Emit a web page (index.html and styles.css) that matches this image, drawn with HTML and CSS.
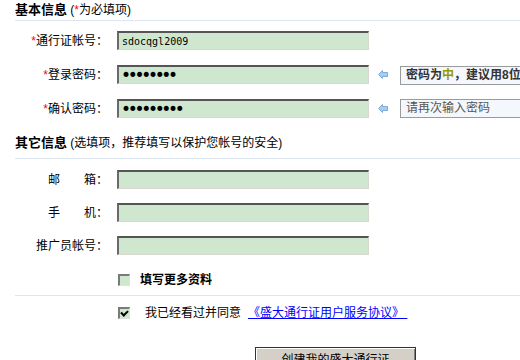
FILE: index.html
```html
<!DOCTYPE html>
<html lang="zh-CN">
<head>
  <meta charset="UTF-8" />
  <title>注册盛大通行证</title>
  <link rel="stylesheet" href="styles.css">
</head>
<body>
  <form class="page" onsubmit="return false">
    <h2 class="sect-title"><b>基本信息</b> (<span class="req">*</span>为必填项)</h2>
    <div class="rows rows-main">
      <div class="row">
        <label class="lbl" for="account"><span class="req">*</span>通行证帐号：</label>
        <input class="field field-mono" id="account" type="text" value="sdocqgl2009" />
      </div>
      <div class="row">
        <label class="lbl" for="pwd"><span class="req">*</span>登录密码：</label>
        <input class="field field-pwd" id="pwd" type="password" value="abcd1234" />
        <svg class="arrow" width="10" height="9" viewBox="0 0 10 9">
          <polygon points="0.5,4.5 4.5,0.5 4.5,2.5 9.5,2.5 9.5,6.5 4.5,6.5 4.5,8.5" fill="#a9cdef" stroke="#7fabd8" stroke-width="1" />
        </svg>
        <div class="tip tip-strong">密码为<span class="lvl">中</span>，建议用8位</div>
      </div>
      <div class="row">
        <label class="lbl" for="pwd2"><span class="req">*</span>确认密码：</label>
        <input class="field field-pwd" id="pwd2" type="password" value="abcd12345" autofocus />
        <svg class="arrow" width="10" height="9" viewBox="0 0 10 9">
          <polygon points="0.5,4.5 4.5,0.5 4.5,2.5 9.5,2.5 9.5,6.5 4.5,6.5 4.5,8.5" fill="#a9cdef" stroke="#7fabd8" stroke-width="1" />
        </svg>
        <div class="tip">请再次输入密码</div>
      </div>
    </div>

    <h2 class="sect-title sect-title-2"><b>其它信息</b> (选填项，推荐填写以保护您帐号的安全)</h2>
    <div class="rows rows-other">
      <div class="row">
        <label class="lbl" for="mail">邮　　箱：</label>
        <input class="field" id="mail" type="text" />
      </div>
      <div class="row">
        <label class="lbl" for="mobile">手　　机：</label>
        <input class="field" id="mobile" type="text" />
      </div>
      <div class="row">
        <label class="lbl" for="promoter">推广员帐号：</label>
        <input class="field" id="promoter" type="text" />
      </div>
    </div>

    <div class="check-row more">
      <input class="chk" type="checkbox" id="more" />
      <label for="more"><b>填写更多资料</b></label>
    </div>

    <div class="divider"></div>

    <div class="check-row agree">
      <input class="chk" type="checkbox" id="agree" checked />
      <label for="agree">我已经看过并同意</label>
      <a class="terms" href="#">《盛大通行证用户服务协议》&nbsp;</a>
    </div>

    <button class="btn" type="submit">创建我的盛大通行证</button>
  </form>
</body>
</html>
```

FILE: styles.css
```css
html {
  overflow: hidden;
}

body {
  margin: 0;
  font-family: "Liberation Sans", "Noto Sans CJK SC", sans-serif;
  font-size: 12px;
  color: #000;
  background: #fff;
}

.page {
  width: 505px;
  padding-left: 15px;
  white-space: nowrap;
}

.req {
  color: #f00;
}

.sect-title {
  margin: 0;
  padding: 3px 0 3px 0;
  font-size: 12px;
  font-weight: normal;
  line-height: 14px;
  border-bottom: 1px solid #dde5ee;
}

.sect-title b {
  font-size: 13px;
}

.sect-title-2 {
  margin-top: 18px;
  padding: 0 0 8px 0;
}

.rows {
  display: flex;
  flex-direction: column;
}

.rows-main {
  margin-top: 10px;
  gap: 15px;
}

.rows-other {
  margin-top: 11px;
  gap: 14px;
}

.row {
  display: flex;
  align-items: center;
  height: 21px;
  margin: -1px 0;
  overflow: hidden;
}

.lbl {
  flex: none;
  width: 93px;
  margin-right: 9px;
  text-align: right;
  line-height: 14px;
}

.field {
  flex: none;
  box-sizing: border-box;
  width: 252px;
  height: 19px;
  margin: 0;
  padding: 0 3px;
  background: #cfe7cf;
  border-style: solid;
  border-width: 2px 1px 1px 2px;
  border-color: #555 #d8d8d0 #d8d8d0 #6a6a6a;
  font-family: "DejaVu Sans Mono", monospace;
  font-size: 10px;
  color: #000;
  outline: none;
}

.field-pwd {
  font-family: "DejaVu Sans", sans-serif;
  font-size: 17px;
  letter-spacing: -3.3px;
  padding-left: 2px;
}

.arrow {
  margin-left: 9px;
  flex: none;
}

.tip {
  flex: none;
  box-sizing: border-box;
  min-width: 140px;
  height: 19px;
  margin-left: 12px;
  padding: 0 5px;
  line-height: 17px;
  border: 1px solid #9a9a9a;
  background: #f4f7fc;
  color: #555;
}

.tip-strong {
  font-weight: bold;
  color: #333;
  margin-top: 2px;
}

.lvl {
  color: #999900;
}

.check-row {
  display: flex;
  align-items: center;
  height: 14px;
  margin-left: 103px;
  line-height: 14px;
}

.more {
  margin-top: 18px;
}

.agree {
  margin-top: 10px;
}

.chk {
  appearance: none;
  -webkit-appearance: none;
  position: relative;
  box-sizing: border-box;
  width: 12px;
  height: 12px;
  margin: 0 10px 0 0;
  background: #cfe7cf;
  border-style: solid;
  border-width: 2px 1px 1px 2px;
  border-color: #7a7a7a #e0e0e0 #e0e0e0 #7a7a7a;
  flex: none;
}

.chk:checked::after {
  content: "";
  position: absolute;
  left: 2px;
  top: 0;
  width: 3px;
  height: 5px;
  border: solid #000;
  border-width: 0 2px 2px 0;
  transform: rotate(45deg);
}

.agree .chk {
  margin-right: 15px;
}

.terms {
  margin-left: 7px;
  color: #00f;
}

.divider {
  margin-top: 8px;
  border-top: 1px solid #dde5ee;
}

.btn {
  display: block;
  width: 161px;
  height: 22px;
  margin: 27px 0 0 240px;
  padding: 0;
  background: #d4d0c8;
  border: 1px solid #333;
  box-shadow: inset 1px 1px 0 #fff, inset -1px -1px 0 #808080;
  font-family: "Liberation Sans", "Noto Sans CJK SC", sans-serif;
  font-size: 12px;
  color: #000;
}
```
